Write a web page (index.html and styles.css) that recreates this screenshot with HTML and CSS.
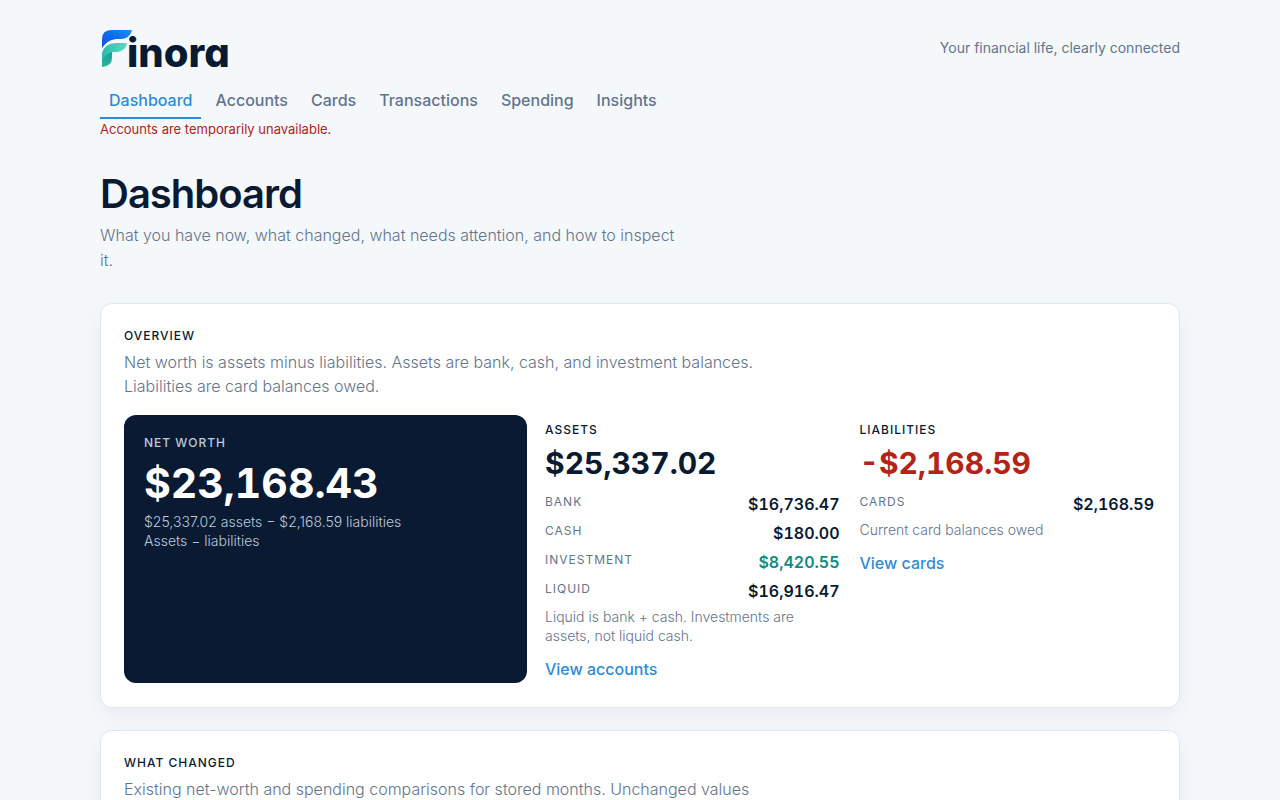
FILE: index.html
```html
<!DOCTYPE html>
<html lang="en">
<head>
  <meta charset="UTF-8" />
  <meta name="viewport" content="width=device-width, initial-scale=1.0" />
  <title>Finora – Dashboard</title>
  <link rel="stylesheet" href="styles.css">
</head>

<body>
  <div class="shell">
    <header class="site-header">
      <a class="brand" href="#" aria-label="Finora">
        <svg class="brand-mark" viewBox="0 0 30 38" aria-hidden="true">
          <defs>
            <linearGradient id="blue" x1="0" y1="1" x2="1" y2="0">
              <stop offset="0" stop-color="#1b50d8" />
              <stop offset=".5" stop-color="#0b6bf0" />
              <stop offset="1" stop-color="#1a92f2" />
            </linearGradient>
            <linearGradient id="teal" x1="0" y1="0" x2="1" y2="0">
              <stop offset="0" stop-color="#2ab8b0" />
              <stop offset=".5" stop-color="#3cd0b8" />
              <stop offset="1" stop-color="#52e0c4" />
            </linearGradient>
            <linearGradient id="stem" x1="0" y1="0" x2="0" y2="1">
              <stop offset="0" stop-color="#1a9c98" />
              <stop offset="1" stop-color="#2ab59c" />
            </linearGradient>
          </defs>
          <path fill="url(#blue)" d="M0 19V10Q0 1 10 1H30Q28 10 18 10H14Q5 11 0 19Z" />
          <path fill="url(#stem)" d="M0 26L10 20V29Q10 37 0 38Z" />
          <path fill="url(#teal)" d="M0 31V24Q3 14 14 14H25Q24 22 15 23H11Q4 24 0 31Z" />
        </svg>
        <span class="brand-name">inora</span>
      </a>
      <p class="tagline">Your financial life, clearly connected</p>
    </header>

    <nav class="main-nav" aria-label="Main">
      <a class="active" href="#" aria-current="page">Dashboard</a>
      <a href="#">Accounts</a>
      <a href="#">Cards</a>
      <a href="#">Transactions</a>
      <a href="#">Spending</a>
      <a href="#">Insights</a>
    </nav>
    <p class="alert" role="alert">Accounts are temporarily unavailable.</p>

    <main>
      <div class="page-head">
        <h1>Dashboard</h1>
        <p>What you have now, what changed, what needs attention, and how to inspect it.</p>
      </div>

      <section class="card">
        <h2 class="label">Overview</h2>
        <p class="intro">Net worth is assets minus liabilities. Assets are bank, cash, and investment balances. Liabilities are card balances owed.</p>

        <div class="overview">
          <div class="net-worth">
            <h3 class="label">Net worth</h3>
            <p class="total">$23,168.43</p>
            <p class="note">$25,337.02 assets − $2,168.59 liabilities</p>
            <p class="note">Assets − liabilities</p>
          </div>

          <div class="metric">
            <h3 class="label">Assets</h3>
            <p class="amount">$25,337.02</p>
            <dl class="breakdown">
              <div><dt>Bank</dt><dd>$16,736.47</dd></div>
              <div><dt>Cash</dt><dd>$180.00</dd></div>
              <div><dt>Investment</dt><dd class="positive">$8,420.55</dd></div>
              <div><dt>Liquid</dt><dd>$16,916.47</dd></div>
            </dl>
            <p class="note">Liquid is bank + cash. Investments are assets, not liquid cash.</p>
            <a class="more" href="#">View accounts</a>
          </div>

          <div class="metric">
            <h3 class="label">Liabilities</h3>
            <p class="amount negative">-$2,168.59</p>
            <dl class="breakdown">
              <div><dt>Cards</dt><dd>$2,168.59</dd></div>
            </dl>
            <p class="note">Current card balances owed</p>
            <a class="more" href="#">View cards</a>
          </div>
        </div>
      </section>

      <section class="card">
        <h2 class="label">What changed</h2>
        <p class="intro">Existing net-worth and spending comparisons for stored months. Unchanged values are left out.</p>
      </section>
    </main>
  </div>
</body>
</html>
```

FILE: styles.css
```css
:root {
  --bg: #f4f8fb;
  --navy: #0a1a33;
  --muted: #64748b;
  --blue: #2f8bd3;
  --red: #b42318;
  --teal: #0f8a7e;
  --line: #dfe6ee;
}

*, *::before, *::after { box-sizing: border-box; margin: 0; padding: 0; }

body {
  background: var(--bg);
  color: var(--navy);
  font-family: Inter, "Liberation Sans", sans-serif;
  font-size: 16px;
  line-height: 24px;
}

a { color: inherit; text-decoration: none; }

.shell {
  max-width: 1128px;
  margin: 0 auto;
  padding: 28px 24px;
}

/* Header */
.site-header {
  display: flex;
  align-items: center;
  justify-content: space-between;
  height: 40px;
}

.brand { display: flex; align-items: baseline; padding-left: 2px; }
.brand-mark { width: 30px; height: 38px; }
.brand-name {
  margin-left: -5px;
  font-size: 40px;
  font-weight: 800;
  line-height: 30px;
  font-feature-settings: "cv11"; /* single-storey a */
}

.tagline { color: var(--muted); font-size: 14px; }

/* Navigation */
.main-nav {
  display: flex;
  gap: 5px;
  margin-top: 16px;
}
.main-nav a {
  padding: 4px 9px;
  border-bottom: 2px solid transparent;
  color: var(--muted);
  font-weight: 500;
  line-height: 25px;
}
.main-nav a.active { border-color: var(--blue); color: var(--blue); }

.alert { color: var(--red); font-size: 13px; line-height: 20px; }

/* Page heading */
.page-head { margin: 31px 0 30px; }
.page-head h1 {
  font-size: 40px;
  font-weight: 600;
  line-height: 48px;
  letter-spacing: -1px;
}
.page-head p {
  max-width: 580px;
  margin-top: 5px;
  color: var(--muted);
  font-weight: 300;
  line-height: 25px;
}

/* Cards */
.card {
  margin-bottom: 22px;
  padding: 20px 23px 24px;
  background: #fff;
  border: 1px solid var(--line);
  border-radius: 12px;
  box-shadow: 0 8px 24px rgba(10, 26, 51, .05);
}
.label {
  font-size: 12px;
  font-weight: 500;
  line-height: 24px;
  letter-spacing: 1px;
  text-transform: uppercase;
}
.intro {
  max-width: 652px;
  margin-top: 2px;
  color: var(--muted);
  font-weight: 300;
}

/* Overview */
.overview {
  display: grid;
  grid-template-columns: 1.35fr 1fr 1fr;
  gap: 16px;
  margin-top: 17px;
}
.net-worth {
  padding: 16px 20px;
  background: var(--navy);
  border-radius: 12px;
  color: #fff;
}
.net-worth .label, .net-worth .note { color: #bccadc; }
.net-worth .total {
  font-size: 41px;
  font-weight: 700;
  line-height: 57px;
  font-variant-numeric: tabular-nums;
}
.note {
  color: var(--muted);
  font-size: 14px;
  font-weight: 300;
  line-height: 19px;
}

.metric { padding: 3px 2px 2px; }
.metric .amount {
  font-size: 30px;
  font-weight: 700;
  line-height: 42px;
  font-variant-numeric: tabular-nums;
}
.metric .note { max-width: 270px; }
.negative { color: var(--red); }

.breakdown { margin-top: 7px; }
.breakdown div {
  display: flex;
  justify-content: space-between;
  padding-bottom: 4px;
}
.breakdown dt {
  color: var(--muted);
  font-size: 12px;
  line-height: 22px;
  letter-spacing: 1px;
  text-transform: uppercase;
}
.breakdown dd {
  padding-top: 1px;
  font-weight: 600;
  font-variant-numeric: tabular-nums;
}
.breakdown .positive { color: var(--teal); }

.more {
  display: inline-block;
  margin-top: 12px;
  color: var(--blue);
  font-weight: 500;
}
```
